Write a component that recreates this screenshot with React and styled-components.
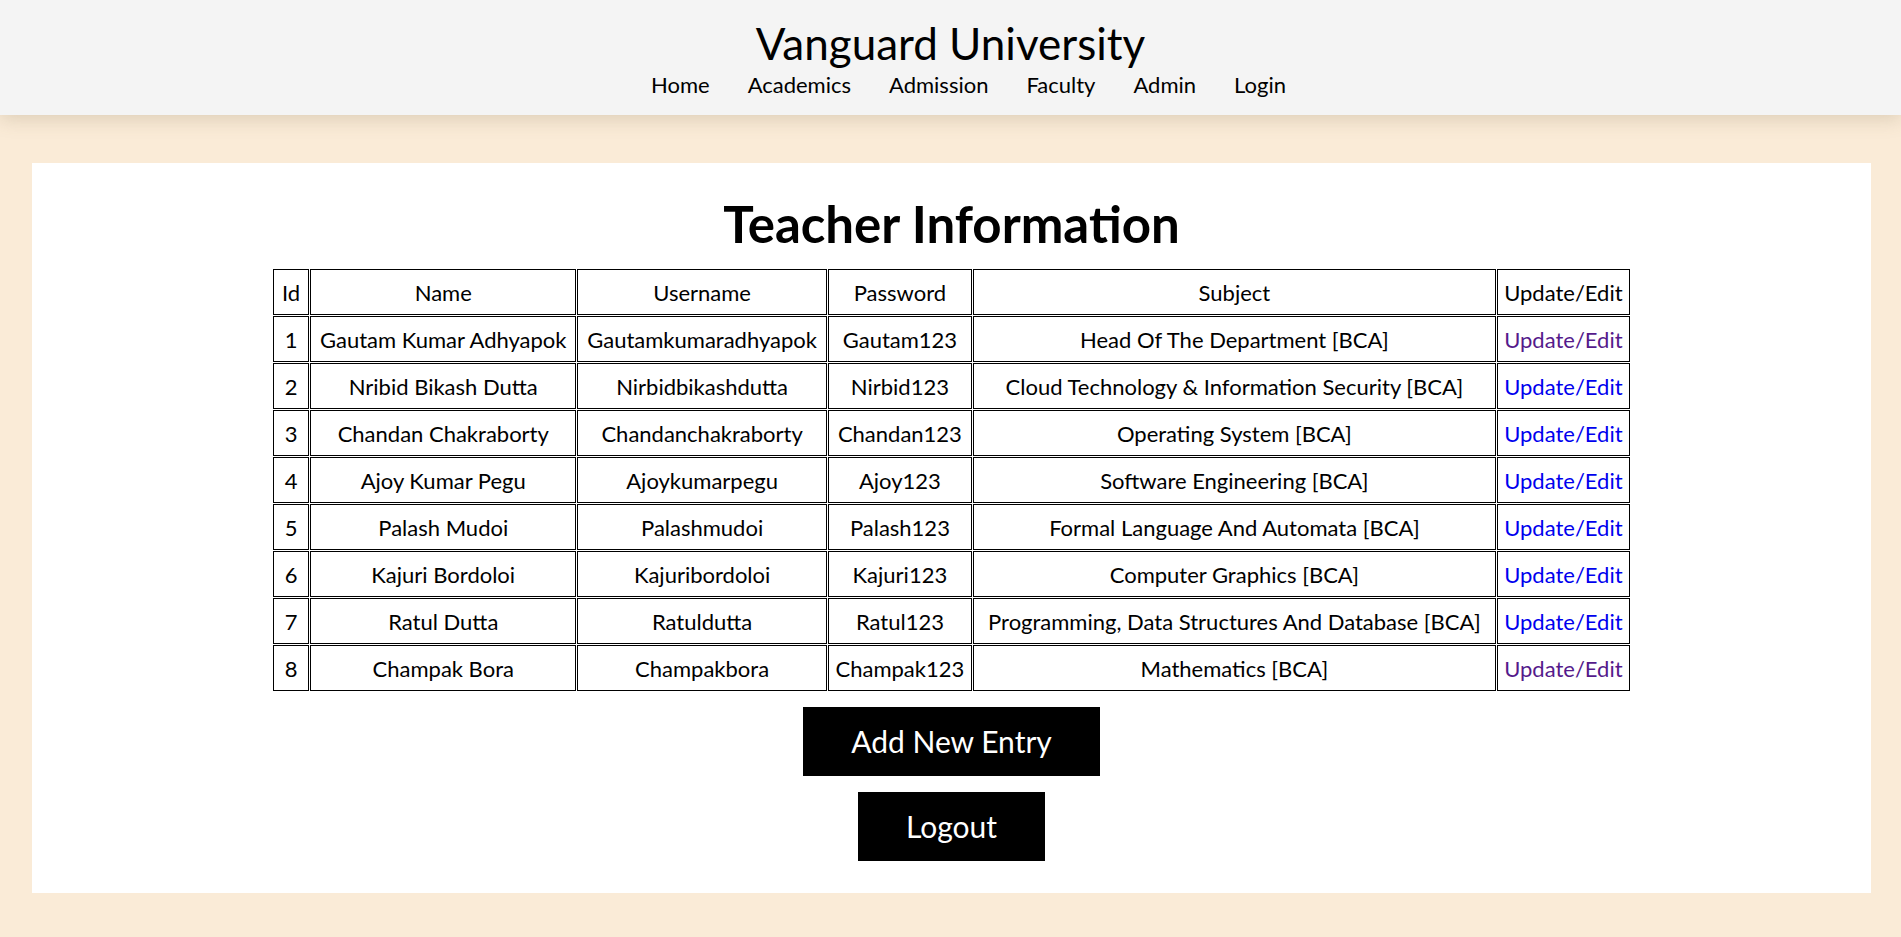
import React from "react";
import styled, { createGlobalStyle } from "styled-components";

const Global = createGlobalStyle`
  html, body {
    margin: 0;
    padding: 0;
    background: antiquewhite;
    font-family: "Gill Sans", "Gill Sans MT", Lato, "Noto Sans", sans-serif;
    color: #000;
  }
`;

const Header = styled.header`
  height: 115px;
  box-sizing: border-box;
  padding-top: 21px;
  background: #f4f4f4;
  box-shadow: 0 4px 18px rgba(120, 100, 70, 0.22);
  display: flex;
  flex-direction: column;
  align-items: center;
  position: relative;
`;

const Title = styled.h1`
  margin: 0;
  font-size: 44px;
  line-height: 44px;
  font-weight: 400;
`;

const Nav = styled.nav`
  display: flex;
  gap: 38px;
  margin-top: 10px;
  padding-left: 36px;
`;

const NavLink = styled.a`
  font-size: 22px;
  line-height: 20px;
  color: #000;
  text-decoration: none;
`;

const Panel = styled.main`
  margin: 48px 30px 0 32px;
  background: #fff;
  padding: 32px 0 32px;
  display: flex;
  flex-direction: column;
  align-items: center;
`;

const Heading = styled.h2`
  margin: 0 0 15px;
  font-size: 51px;
  line-height: 58px;
  font-weight: 700;
`;

const Table = styled.table`
  border-collapse: separate;
  border-spacing: 1px;
  table-layout: fixed;
  width: 1359px;
`;

const Th = styled.th`
  box-sizing: border-box;
  width: ${(p) => p.$w}px;
  height: 46px;
  padding: 0 4px;
  border: 1px solid #000;
  font-weight: 400;
  font-size: 22px;
  text-align: center;
  white-space: nowrap;
`;

const Td = styled.td`
  box-sizing: border-box;
  height: 46px;
  padding: 0 4px;
  border: 1px solid #000;
  font-size: 22px;
  text-align: center;
  white-space: nowrap;
`;

const EditLink = styled.a`
  color: ${(p) => (p.$visited ? "#551a8b" : "#0000ee")};
  text-decoration: none;
`;

const Actions = styled.div`
  display: flex;
  flex-direction: column;
  align-items: center;
  gap: 16px;
  margin-top: 15px;
`;

const Button = styled.button`
  height: 69px;
  padding: 0 48px;
  background: #000;
  color: #fff;
  border: none;
  font-family: inherit;
  font-size: 30px;
  line-height: 69px;
  cursor: pointer;
`;

const columns = [
  ["Id", 36],
  ["Name", 266],
  ["Username", 249],
  ["Password", 144],
  ["Subject", 522],
  ["Update/Edit", 133],
];

const rows = [
  [1, "Gautam Kumar Adhyapok", "Gautamkumaradhyapok", "Gautam123", "Head Of The Department [BCA]", true],
  [2, "Nribid Bikash Dutta", "Nirbidbikashdutta", "Nirbid123", "Cloud Technology & Information Security [BCA]", false],
  [3, "Chandan Chakraborty", "Chandanchakraborty", "Chandan123", "Operating System [BCA]", false],
  [4, "Ajoy Kumar Pegu", "Ajoykumarpegu", "Ajoy123", "Software Engineering [BCA]", false],
  [5, "Palash Mudoi", "Palashmudoi", "Palash123", "Formal Language And Automata [BCA]", false],
  [6, "Kajuri Bordoloi", "Kajuribordoloi", "Kajuri123", "Computer Graphics [BCA]", false],
  [7, "Ratul Dutta", "Ratuldutta", "Ratul123", "Programming, Data Structures And Database [BCA]", false],
  [8, "Champak Bora", "Champakbora", "Champak123", "Mathematics [BCA]", true],
];

export default function App() {
  return (
    <>
      <Global />
      <Header>
        <Title>Vanguard University</Title>
        <Nav>
          {["Home", "Academics", "Admission", "Faculty", "Admin", "Login"].map((n) => (
            <NavLink key={n} href="#">
              {n}
            </NavLink>
          ))}
        </Nav>
      </Header>
      <Panel>
        <Heading>Teacher Information</Heading>
        <Table>
          <thead>
            <tr>
              {columns.map(([c, w]) => (
                <Th key={c} $w={w}>
                  {c}
                </Th>
              ))}
            </tr>
          </thead>
          <tbody>
            {rows.map(([id, name, user, pass, subj, visited]) => (
              <tr key={id}>
                <Td>{id}</Td>
                <Td>{name}</Td>
                <Td>{user}</Td>
                <Td>{pass}</Td>
                <Td>{subj}</Td>
                <Td>
                  <EditLink href="#" $visited={visited}>
                    Update/Edit
                  </EditLink>
                </Td>
              </tr>
            ))}
          </tbody>
        </Table>
        <Actions>
          <Button>Add New Entry</Button>
          <Button>Logout</Button>
        </Actions>
      </Panel>
    </>
  );
}
